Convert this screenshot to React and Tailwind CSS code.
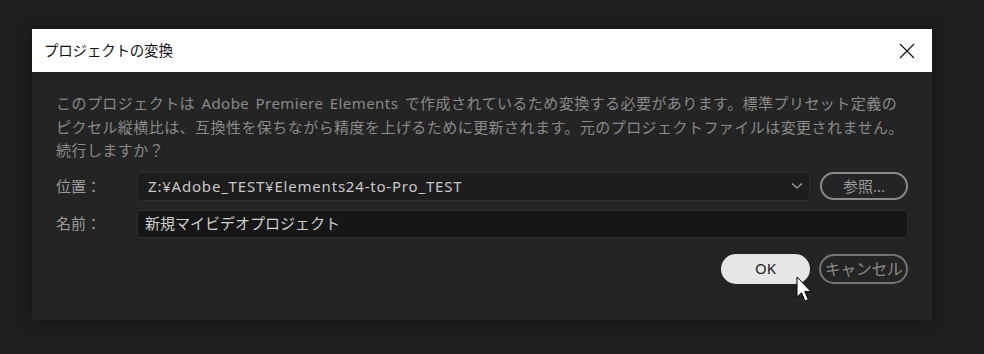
import React from "react";

const font = { fontFamily: '"Noto Sans", "Noto Sans CJK JP", sans-serif' };

export default function App() {
  return (
    <div
      className="w-[984px] h-[354px] bg-[#1e1e1e] pt-[29px] pl-[32px] overflow-hidden"
      style={font}
    >
      <div className="relative w-[900px] h-[291px] bg-[#242424] shadow-[0_0_12px_rgba(0,0,0,0.35)] flex flex-col">
        <div className="h-[43px] bg-white flex items-center justify-between pl-[12px] pr-[17px]">
          <span className="text-[14.5px] text-[#111] tracking-[-0.2px]">プロジェクトの変換</span>
          <svg width="16" height="16" viewBox="0 0 16 16" className="block">
            <path d="M1 1 L15 15 M15 1 L1 15" stroke="#111" strokeWidth="1.2" fill="none" />
          </svg>
        </div>
        <div className="flex flex-col px-[24px] pt-[20px]">
          <p className="text-[15px] leading-[23.5px] text-[#8a8a8a] tracking-[0.45px] [word-spacing:2px] whitespace-nowrap">
            このプロジェクトは Adobe Premiere Elements で作成されているため変換する必要があります。標準プリセット定義の
            <br />
            ピクセル縦横比は、互換性を保ちながら精度を上げるために更新されます。元のプロジェクトファイルは変更されません。
            <br />
            続行しますか？
          </p>
          <div className="flex items-center mt-[9px]">
            <span className="w-[81px] text-[15px] text-[#9a9a9a]">位置：</span>
            <div className="w-[673px] h-[29px] bg-[#1d1d1d] border border-[#2e2e2e] rounded-[3px] flex items-center justify-between pl-[10px] pr-[6px]">
              <span className="text-[15px] text-[#c8c8c8] tracking-[0.8px]">Z:¥Adobe_TEST¥Elements24-to-Pro_TEST</span>
              <svg width="12" height="8" viewBox="0 0 12 8">
                <path d="M1 1.5 L6 6 L11 1.5" stroke="#a8a8a8" strokeWidth="1.1" fill="none" />
              </svg>
            </div>
            <button className="ml-[10px] w-[88px] h-[28px] rounded-full border-2 border-[#8a8a8a] text-[15px] text-[#9a9a9a] flex items-center justify-center">
              参照...
            </button>
          </div>
          <div className="flex items-center mt-[9px]">
            <span className="w-[81px] text-[15px] text-[#9a9a9a]">名前：</span>
            <div className="w-[771px] h-[28px] bg-[#161616] border border-[#2c2c2c] rounded-[3px] flex items-center pl-[7px]">
              <span className="text-[15px] text-[#d0d0d0]">新規マイビデオプロジェクト</span>
            </div>
          </div>
          <div className="flex justify-end gap-[9px] mt-[16px]">
            <button className="w-[89px] h-[30px] rounded-full bg-[#e6e6e6] text-[15px] text-[#1a1a1a] flex items-center justify-center">
              OK
            </button>
            <button className="w-[89px] h-[30px] rounded-full border-2 border-[#757575] text-[16px] text-[#8a8a8a] tracking-[-0.5px] flex items-center justify-center">
              キャンセル
            </button>
          </div>
        </div>
        <svg
          className="absolute left-[764px] top-[247px]"
          width="18"
          height="27"
          viewBox="0 0 18 27"
        >
          <path
            d="M1 1 L1 21 L5.5 16.8 L9 25 L12.3 23.6 L8.8 15.6 L15 15.6 Z"
            fill="#fff"
            stroke="#000"
            strokeWidth="1"
            strokeLinejoin="round"
          />
        </svg>
      </div>
    </div>
  );
}
